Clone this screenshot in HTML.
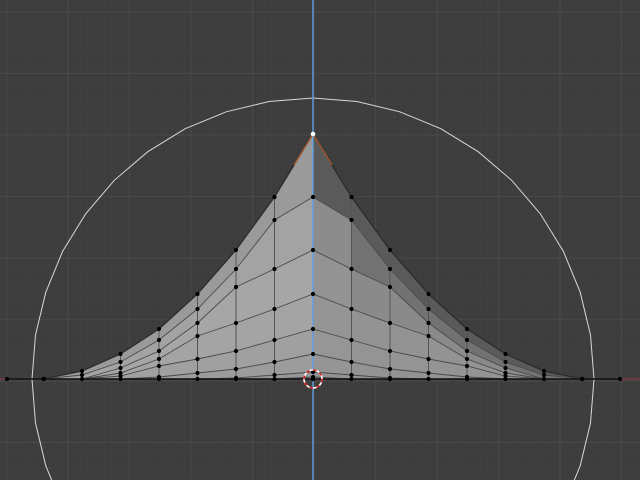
<!DOCTYPE html>
<html><head><meta charset="utf-8"><style>
html,body{margin:0;padding:0;background:#3d3d3d;width:640px;height:480px;overflow:hidden}
svg{display:block;overflow:hidden}
</style></head><body>
<svg id="s" width="640" height="480" viewBox="0 0 640 480" xmlns="http://www.w3.org/2000/svg">
<defs>
<pattern id="mg" width="6.15" height="6.15" patternUnits="userSpaceOnUse" x="6.5" y="12">
<path d="M0 0H6.15M0 0V6.15" stroke="#414141" stroke-width="1" fill="none"/>
</pattern>
</defs>
<rect width="640" height="480" fill="#3d3d3d"/>
<rect width="640" height="480" fill="url(#mg)"/>
<g id="grid" stroke="#484848" stroke-width="1.2"></g>
<g id="mesh"></g>
<polygon id="circ" fill="none" stroke="#d8d8d8" stroke-width="1"/>
<line x1="0" y1="379" x2="640" y2="379" stroke="#8a3a48" stroke-width="1.2"/>
<line x1="7" y1="379" x2="620" y2="379" stroke="#111" stroke-width="1.5"/>
<line x1="313" y1="0" x2="313" y2="480" stroke="#5f9fe0" stroke-width="1.4"/>
<g id="dots" fill="#000"></g>
<circle cx="313" cy="134" r="2.3" fill="#fff"/>
<circle cx="313" cy="379" r="9" fill="none" stroke="#fff" stroke-width="1.6"/>
<circle cx="313" cy="379" r="9" fill="none" stroke="#d02020" stroke-width="1.6" stroke-dasharray="3.5 3.5"/>
</svg>
<script>
var NS="http://www.w3.org/2000/svg";
function el(p,t,a){var e=document.createElementNS(NS,t);for(var k in a)e.setAttribute(k,a[k]);p.appendChild(e);return e;}
var g=document.getElementById('grid');
for(var x=6.5;x<640;x+=61.5)el(g,'line',{x1:x,y1:0,x2:x,y2:480});
for(var y=12;y<480;y+=61.5)el(g,'line',{x1:0,y1:y,x2:640,y2:y});
var cols=[[134,197,250,294,329,354,372,377,379],[197,220,269,309,340,362,375,379],[250,269,287,323,351,369,378,379],[294,309,323,336,359,373,379],[329,340,351,359,366,377,379],[354,362,368,373,376,379],[371,375,379],[379]];
var N=9;
for(var c=0;c<cols.length;c++){while(cols[c].length<N)cols[c].push(379);}
var P=[];
for(var c=-7;c<=7;c++){var a=Math.abs(c);P.push({x:313+38.5*c,ys:cols[a],c:c});}
var m=document.getElementById('mesh');
var leftC=['#9a9a9a','#a3a3a3','#a6a6a6','#a4a4a4','#a0a0a0','#9c9c9c','#989898','#959595'];
var rightC=['#5a5a5a','#727272','#8a8a8a','#939393','#949494','#939393','#919191','#8f8f8f'];
for(var i=0;i<P.length-1;i++){
 var A=P[i],B=P[i+1];var right=B.c>0;
 for(var k=0;k<N-1;k++){
  var col=right?rightC[k]:leftC[k];
  if(right&&B.c<=1&&k>=1)col=['#5a5a5a','#8c8c8c','#939393','#959595','#969696','#959595','#939393','#919191'][k];
  el(m,'polygon',{points:A.x+','+A.ys[k]+' '+B.x+','+B.ys[k]+' '+B.x+','+B.ys[k+1]+' '+A.x+','+A.ys[k+1],fill:col,stroke:col,'stroke-width':0.6});
 }
}
el(m,'polygon',{points:'44,379 '+P[0].x+','+P[0].ys[0]+' '+P[0].x+',379',fill:'#9a9a9a'});
el(m,'polygon',{points:'582,379 '+P[14].x+','+P[14].ys[0]+' '+P[14].x+',379',fill:'#5a5a5a'});
for(var k=0;k<N;k++){var pts=['44,379'];P.forEach(function(p){pts.push(p.x+','+p.ys[k]);});pts.push('582,379');
 el(m,'polyline',{points:pts.join(' '),fill:'none',stroke:k==0?'#2a2a2a':'#4a4a4a','stroke-width':k==0?1.2:0.9});}
P.forEach(function(p){el(m,'line',{x1:p.x,y1:p.ys[0],x2:p.x,y2:379,stroke:'#555','stroke-width':1});});
el(m,'polyline',{points:'294,165 313,134 332,165',fill:'none',stroke:'#b8602a','stroke-width':1.1});
var d=document.getElementById('dots');
P.forEach(function(p){var seen={};p.ys.forEach(function(y){if(seen[y])return;seen[y]=1;if(p.c==0&&y==134)return;el(d,'circle',{cx:p.x,cy:y,r:2.1});});});
[7,44,582,620].forEach(function(x){el(d,'circle',{cx:x,cy:379,r:2.1});});
var pts=[];for(var i=0;i<40;i++){var t=i/40*2*Math.PI;pts.push((313+281*Math.cos(t)).toFixed(1)+','+(379+281*Math.sin(t)).toFixed(1));}
document.getElementById('circ').setAttribute('points',pts.join(' '));
</script>
</body></html>
